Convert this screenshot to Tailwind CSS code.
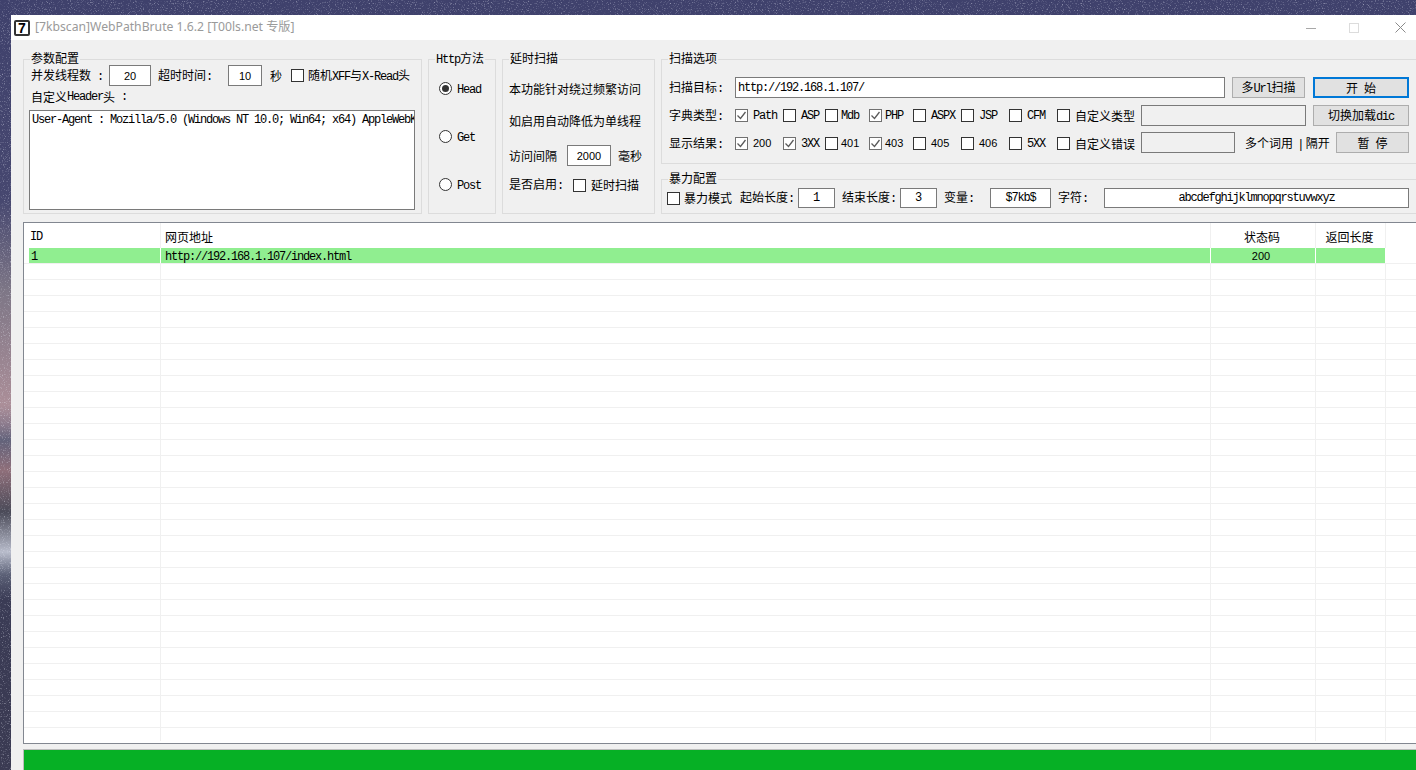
<!DOCTYPE html>
<html lang="zh-CN">
<head>
  <meta charset="UTF-8" />
  <title>WebPathBrute</title>
  <script src="https://cdn.jsdelivr.net/npm/@tailwindcss/browser@4"></script>
</head>
<body class="overflow-hidden">
<div class="relative w-[1416px] h-[770px] overflow-hidden pl-[11px] pt-[15px] bg-[linear-gradient(180deg,#3f416c_0px,#46476f_200px,#7d7686_290px,#ab8e98_405px,#8a7a8c_425px,#62627a_440px,#8f6f7a_470px,#4a4a58_512px,#b8bccb_552px,#5a5f75_575px,#3a3b55_600px,#3a3a52_770px)] font-['Noto_Sans_CJK_SC',sans-serif] text-[12px] leading-none text-black">
  <!-- wallpaper noise -->
  <svg class="absolute inset-0 opacity-50" width="1416" height="770">
    <filter id="stars"><feTurbulence type="fractalNoise" baseFrequency="0.85" numOctaves="2" seed="7"/><feColorMatrix values="0 0 0 0 0.85 0 0 0 0 0.87 0 0 0 0 0.96 3 0 0 0 -1.7"/></filter>
    <rect width="1416" height="770" filter="url(#stars)"/>
  </svg>

  <div class="relative w-[1405px] h-[755px] flex flex-col overflow-hidden">

    <!-- title bar -->
    <div class="h-[25px] shrink-0 bg-white flex items-center">
      <div class="ml-[3px] w-[16px] h-[16px] border-2 border-[#333] rounded-[2px] flex items-center justify-center font-['Liberation_Sans',sans-serif] font-bold text-[14px] text-black">7</div>
      <span class="ml-[5px] font-['Noto_Sans','Noto_Sans_CJK_SC',sans-serif] text-[12.2px] text-[#9a9a9a]">[7kbscan]WebPathBrute 1.6.2 [T00ls.net 专版]</span>
      <div class="ml-auto flex items-center">
        <svg width="10" height="10" viewBox="0 0 10 10" class="mr-[33px]"><path d="M0 5.5H10" stroke="#a8a8a8" fill="none"/></svg>
        <svg width="10" height="10" viewBox="0 0 10 10" class="mr-[36px]"><rect x="0.5" y="0.5" width="9" height="9" stroke="#dcdcdc" fill="none"/></svg>
        <svg width="11" height="11" viewBox="0 0 11 11" class="mr-[10px]"><path d="M0.5 0.5L10.5 10.5M10.5 0.5L0.5 10.5" stroke="#8a8a8a" fill="none"/></svg>
      </div>
    </div>

    <!-- window body -->
    <div class="flex-1 bg-[#f0f0f0] pl-[12px] pt-[19px] overflow-hidden">
      <div class="flex gap-[6px] h-[155px] w-[1500px]">

        <!-- 参数配置 -->
        <div class="relative w-[399px] h-[155px] shrink-0 border border-[#dcdcdc]">
          <span class="absolute left-[6px] -top-[8px] px-[1px] bg-[#f0f0f0]">参数配置</span>
          <div class="flex items-center h-[21px] mt-[5px] ml-[7px]">
            <span class="w-[78px] whitespace-pre">并发线程数<span class="font-['Liberation_Mono',monospace] tracking-[-1.2px]"> :</span></span>
            <input value="20" class="w-[42px] h-[21px] border border-[#7a7a7a] bg-white text-center font-['Liberation_Sans',sans-serif] text-[11px]" />
            <span class="w-[70px] ml-[7px]">超时时间<span class="font-['Liberation_Mono',monospace] tracking-[-1.2px]">:</span></span>
            <input value="10" class="w-[34px] h-[21px] border border-[#7a7a7a] bg-white text-center font-['Liberation_Sans',sans-serif] text-[11px]" />
            <span class="ml-[8px]">秒</span>
            <span class="ml-[9px] w-[13px] h-[13px] border border-[#333] bg-white"></span>
            <span class="ml-[4px]">随机<span class="font-['Liberation_Mono',monospace] tracking-[-1.2px]">XFF</span>与<span class="font-['Liberation_Mono',monospace] tracking-[-1.2px]">X-Read</span>头</span>
          </div>
          <div class="flex items-center h-[22px] ml-[7px] whitespace-pre">自定义<span class="font-['Liberation_Mono',monospace] tracking-[-1.2px]">Header</span>头<span class="font-['Liberation_Mono',monospace] tracking-[-1.2px]"> :</span></div>
          <textarea wrap="off" class="block resize-none overflow-hidden w-[386px] h-[100px] mt-[2px] ml-[5px] px-[2px] py-[2px] border border-[#7a7a7a] bg-white font-['Liberation_Mono',monospace] text-[12px] tracking-[-1.2px] leading-[14px]">User-Agent : Mozilla/5.0 (Windows NT 10.0; Win64; x64) AppleWebKit/537.36</textarea>
        </div>

        <!-- Http方法 -->
        <div class="relative w-[68px] h-[155px] shrink-0 border border-[#dcdcdc] pl-[10px] pt-[22px] flex flex-col gap-[35px]">
          <span class="absolute left-[6px] -top-[8px] px-[1px] bg-[#f0f0f0]"><span class="font-['Liberation_Mono',monospace] tracking-[-1.2px]">Http</span>方法</span>
          <div class="flex items-center h-[13px]">
            <span class="w-[13px] h-[13px] rounded-full border border-[#333] bg-white flex items-center justify-center"><span class="w-[7px] h-[7px] rounded-full bg-[#333]"></span></span>
            <span class="ml-[5px] pt-[2px] font-['Liberation_Mono',monospace] tracking-[-1.2px]">Head</span>
          </div>
          <div class="flex items-center h-[13px]">
            <span class="w-[13px] h-[13px] rounded-full border border-[#333] bg-white"></span>
            <span class="ml-[5px] pt-[2px] font-['Liberation_Mono',monospace] tracking-[-1.2px]">Get</span>
          </div>
          <div class="flex items-center h-[13px]">
            <span class="w-[13px] h-[13px] rounded-full border border-[#333] bg-white"></span>
            <span class="ml-[5px] pt-[2px] font-['Liberation_Mono',monospace] tracking-[-1.2px]">Post</span>
          </div>
        </div>

        <!-- 延时扫描 -->
        <div class="relative w-[153px] h-[155px] shrink-0 border border-[#dcdcdc] pl-[6px] pt-[19px]">
          <span class="absolute left-[6px] -top-[8px] px-[1px] bg-[#f0f0f0]">延时扫描</span>
          <div class="flex items-center h-[20px]">本功能针对绕过频繁访问</div>
          <div class="flex items-center h-[20px] mt-[12px]">如启用自动降低为单线程</div>
          <div class="flex items-center h-[21px] mt-[14px]">
            <span class="w-[58px]">访问间隔</span>
            <input value="2000" class="w-[44px] h-[21px] border border-[#7a7a7a] bg-white text-center font-['Liberation_Sans',sans-serif] text-[11px]" />
            <span class="ml-[7px]">毫秒</span>
          </div>
          <div class="flex items-center h-[20px] mt-[9px]">
            <span class="w-[64px]">是否启用<span class="font-['Liberation_Mono',monospace] tracking-[-1.2px]">:</span></span>
            <span class="w-[13px] h-[13px] border border-[#333] bg-white"></span>
            <span class="ml-[5px]">延时扫描</span>
          </div>
        </div>

        <div class="w-[800px] shrink-0">
          <!-- 扫描选项 -->
          <div class="relative h-[105px] border border-[#dcdcdc] pl-[7px] pt-[17px]">
            <span class="absolute left-[6px] -top-[8px] px-[1px] bg-[#f0f0f0]">扫描选项</span>
            <div class="flex items-center h-[21px]">
              <span class="w-[66px]">扫描目标<span class="font-['Liberation_Mono',monospace] tracking-[-1.2px]">:</span></span>
              <input value="http://192.168.1.107/" class="w-[490px] h-[21px] px-[2px] border border-[#7a7a7a] bg-white font-['Liberation_Mono',monospace] text-[12px] tracking-[-1.2px]" />
              <button class="w-[73px] h-[21px] ml-[7px] border border-[#adadad] bg-[#e1e1e1]">多<span class="font-['Liberation_Mono',monospace] tracking-[-1.2px]">Url</span>扫描</button>
              <button class="w-[96px] h-[21px] ml-[8px] border-2 border-[#0078d7] bg-[#e1e1e1]">开<span class="inline-block w-[6px]"></span>始</button>
            </div>
            <div class="flex items-center h-[21px] mt-[7px]">
              <span class="w-[66px]">字典类型<span class="font-['Liberation_Mono',monospace] tracking-[-1.2px]">:</span></span>
              <div class="w-[406px] grid grid-cols-[48px_42px_44px_44px_48px_48px_48px_84px] items-center">
                <div class="flex items-center"><span class="w-[13px] h-[13px] border border-[#707070] bg-white flex items-center justify-center"><svg width="11" height="11" viewBox="0 0 11 11"><path d="M1.5 5.5L4.5 8.5L9.5 2" stroke="#5a5a5a" stroke-width="1.3" fill="none"/></svg></span><span class="ml-[5px] font-['Liberation_Mono',monospace] tracking-[-1.2px]">Path</span></div>
                <div class="flex items-center"><span class="w-[13px] h-[13px] border border-[#333] bg-white"></span><span class="ml-[5px] font-['Liberation_Mono',monospace] tracking-[-1.2px]">ASP</span></div>
                <div class="flex items-center"><span class="w-[13px] h-[13px] border border-[#333] bg-white"></span><span class="ml-[3px] font-['Liberation_Mono',monospace] tracking-[-1.2px]">Mdb</span></div>
                <div class="flex items-center"><span class="w-[13px] h-[13px] border border-[#707070] bg-white flex items-center justify-center"><svg width="11" height="11" viewBox="0 0 11 11"><path d="M1.5 5.5L4.5 8.5L9.5 2" stroke="#5a5a5a" stroke-width="1.3" fill="none"/></svg></span><span class="ml-[3px] font-['Liberation_Mono',monospace] tracking-[-1.2px]">PHP</span></div>
                <div class="flex items-center"><span class="w-[13px] h-[13px] border border-[#333] bg-white"></span><span class="ml-[5px] font-['Liberation_Mono',monospace] tracking-[-1.2px]">ASPX</span></div>
                <div class="flex items-center"><span class="w-[13px] h-[13px] border border-[#333] bg-white"></span><span class="ml-[5px] font-['Liberation_Mono',monospace] tracking-[-1.2px]">JSP</span></div>
                <div class="flex items-center"><span class="w-[13px] h-[13px] border border-[#333] bg-white"></span><span class="ml-[5px] font-['Liberation_Mono',monospace] tracking-[-1.2px]">CFM</span></div>
                <div class="flex items-center"><span class="w-[13px] h-[13px] border border-[#333] bg-white"></span><span class="ml-[5px]">自定义类型</span></div>
              </div>
              <input class="w-[165px] h-[21px] border border-[#7a7a7a] bg-[#f0f0f0]" disabled />
              <button class="w-[96px] h-[21px] ml-[7px] border border-[#adadad] bg-[#e1e1e1]">切换加载<span class="font-['Liberation_Mono',monospace] tracking-[-1.2px]">dic</span></button>
            </div>
            <div class="flex items-center h-[21px] mt-[6px]">
              <span class="w-[66px] pt-[2px]">显示结果<span class="font-['Liberation_Mono',monospace] tracking-[-1.2px]">:</span></span>
              <div class="w-[406px] pt-[2px] grid grid-cols-[48px_42px_44px_44px_48px_48px_48px_84px] items-center">
                <div class="flex items-center"><span class="w-[13px] h-[13px] border border-[#707070] bg-white flex items-center justify-center"><svg width="11" height="11" viewBox="0 0 11 11"><path d="M1.5 5.5L4.5 8.5L9.5 2" stroke="#5a5a5a" stroke-width="1.3" fill="none"/></svg></span><span class="ml-[5px] font-['Liberation_Sans',sans-serif] text-[11px]">200</span></div>
                <div class="flex items-center"><span class="w-[13px] h-[13px] border border-[#707070] bg-white flex items-center justify-center"><svg width="11" height="11" viewBox="0 0 11 11"><path d="M1.5 5.5L4.5 8.5L9.5 2" stroke="#5a5a5a" stroke-width="1.3" fill="none"/></svg></span><span class="ml-[5px] font-['Liberation_Mono',monospace] tracking-[-1.2px]">3XX</span></div>
                <div class="flex items-center"><span class="w-[13px] h-[13px] border border-[#333] bg-white"></span><span class="ml-[3px] font-['Liberation_Sans',sans-serif] text-[11px]">401</span></div>
                <div class="flex items-center"><span class="w-[13px] h-[13px] border border-[#707070] bg-white flex items-center justify-center"><svg width="11" height="11" viewBox="0 0 11 11"><path d="M1.5 5.5L4.5 8.5L9.5 2" stroke="#5a5a5a" stroke-width="1.3" fill="none"/></svg></span><span class="ml-[3px] font-['Liberation_Sans',sans-serif] text-[11px]">403</span></div>
                <div class="flex items-center"><span class="w-[13px] h-[13px] border border-[#333] bg-white"></span><span class="ml-[5px] font-['Liberation_Sans',sans-serif] text-[11px]">405</span></div>
                <div class="flex items-center"><span class="w-[13px] h-[13px] border border-[#333] bg-white"></span><span class="ml-[5px] font-['Liberation_Sans',sans-serif] text-[11px]">406</span></div>
                <div class="flex items-center"><span class="w-[13px] h-[13px] border border-[#333] bg-white"></span><span class="ml-[5px] font-['Liberation_Mono',monospace] tracking-[-1.2px]">5XX</span></div>
                <div class="flex items-center"><span class="w-[13px] h-[13px] border border-[#333] bg-white"></span><span class="ml-[5px]">自定义错误</span></div>
              </div>
              <input class="w-[94px] h-[21px] border border-[#7a7a7a] bg-[#f0f0f0]" disabled />
              <span class="w-[91px] ml-[10px] pt-[2px] whitespace-pre">多个词用<span class="font-['Liberation_Mono',monospace] tracking-[-3px]"> | </span>隔开</span>
              <button class="w-[73px] h-[21px] border border-[#adadad] bg-[#e1e1e1]">暂<span class="inline-block w-[6px]"></span>停</button>
            </div>
          </div>

          <!-- 暴力配置 -->
          <div class="relative h-[35px] mt-[15px] border border-[#dcdcdc] pl-[5px] pt-[8px]">
            <span class="absolute left-[6px] -top-[8px] px-[1px] bg-[#f0f0f0]">暴力配置</span>
            <div class="flex items-center h-[20px]">
              <span class="w-[13px] h-[13px] border border-[#333] bg-white"></span>
              <span class="w-[56px] ml-[4px]">暴力模式</span>
              <span class="w-[58px]">起始长度<span class="font-['Liberation_Mono',monospace] tracking-[-1.2px]">:</span></span>
              <input value="1" class="w-[37px] h-[20px] border border-[#7a7a7a] bg-white text-center font-['Liberation_Mono',monospace] text-[12px]" />
              <span class="w-[58px] ml-[7px]">结束长度<span class="font-['Liberation_Mono',monospace] tracking-[-1.2px]">:</span></span>
              <input value="3" class="w-[37px] h-[20px] border border-[#7a7a7a] bg-white text-center font-['Liberation_Mono',monospace] text-[12px]" />
              <span class="w-[46px] ml-[7px]">变量<span class="font-['Liberation_Mono',monospace] tracking-[-1.2px]">:</span></span>
              <input value="$7kb$" class="w-[61px] h-[20px] border border-[#7a7a7a] bg-white text-center font-['Liberation_Mono',monospace] text-[12px] tracking-[-1.2px]" />
              <span class="w-[46px] ml-[7px]">字符<span class="font-['Liberation_Mono',monospace] tracking-[-1.2px]">:</span></span>
              <input value="abcdefghijklmnopqrstuvwxyz" class="w-[305px] h-[20px] border border-[#7a7a7a] bg-white text-center font-['Liberation_Mono',monospace] text-[12px] tracking-[-1.2px]" />
            </div>
          </div>
        </div>
      </div>

      <!-- result list -->
      <div class="w-[1400px] h-[522px] mt-[8px] border border-[#828790] bg-white overflow-hidden">
        <div class="grid grid-cols-[137px_1050px_105px_70px] h-[25px]">
          <div class="border-r border-[#f0f0f0] pl-[6px] flex items-center pt-[3px] font-['Liberation_Mono',monospace] tracking-[-1.2px]">ID</div>
          <div class="border-r border-[#f0f0f0] pl-[4px] flex items-center pt-[3px]">网页地址</div>
          <div class="border-r border-[#f0f0f0] flex items-center justify-center pt-[3px] pr-[2px]">状态码</div>
          <div class="border-r border-[#f0f0f0] flex items-center justify-center pt-[3px] pr-[2px]">返回长度</div>
        </div>
        <div class="h-[16px] border-b border-[#f0f0f0]">
          <div class="grid grid-cols-[132px_1050px_105px_70px] h-[15px] ml-[5px] w-[1357px] bg-[#90ee90]">
            <div class="border-r border-white pl-[2px] pt-[2px] flex items-center font-['Liberation_Mono',monospace] tracking-[-1.2px]">1</div>
            <div class="border-r border-white pl-[4px] pt-[2px] flex items-center font-['Liberation_Mono',monospace] tracking-[-1.2px]">http://192.168.1.107/index.html</div>
            <div class="border-r border-white pt-[2px] flex items-center justify-center font-['Liberation_Sans',sans-serif] text-[11px] pr-[4px]">200</div>
            <div class="border-r border-white"></div>
          </div>
        </div>
        <div id="rows"></div>
      </div>

      <!-- progress bar -->
      <div class="w-[1400px] h-[30px] mt-[5px] border border-[#bcbcbc] bg-[#06b025]"></div>
    </div>
  </div>
</div>

<script>
  // filas vacias de la lista
  const rows = document.getElementById("rows");
  let html = "";
  for (let i = 0; i < 29; i++) {
    html += '<div class="grid grid-cols-[137px_1050px_105px_70px] h-[16px] border-b border-[#f0f0f0]"><div class="border-r border-[#f0f0f0]"></div><div class="border-r border-[#f0f0f0]"></div><div class="border-r border-[#f0f0f0]"></div><div class="border-r border-[#f0f0f0]"></div></div>';
  }
  html += '<div class="grid grid-cols-[137px_1050px_105px_70px] h-[13px]"><div class="border-r border-[#f0f0f0]"></div><div class="border-r border-[#f0f0f0]"></div><div class="border-r border-[#f0f0f0]"></div><div class="border-r border-[#f0f0f0]"></div></div>';
  rows.innerHTML = html;
</script>
</body>
</html>
